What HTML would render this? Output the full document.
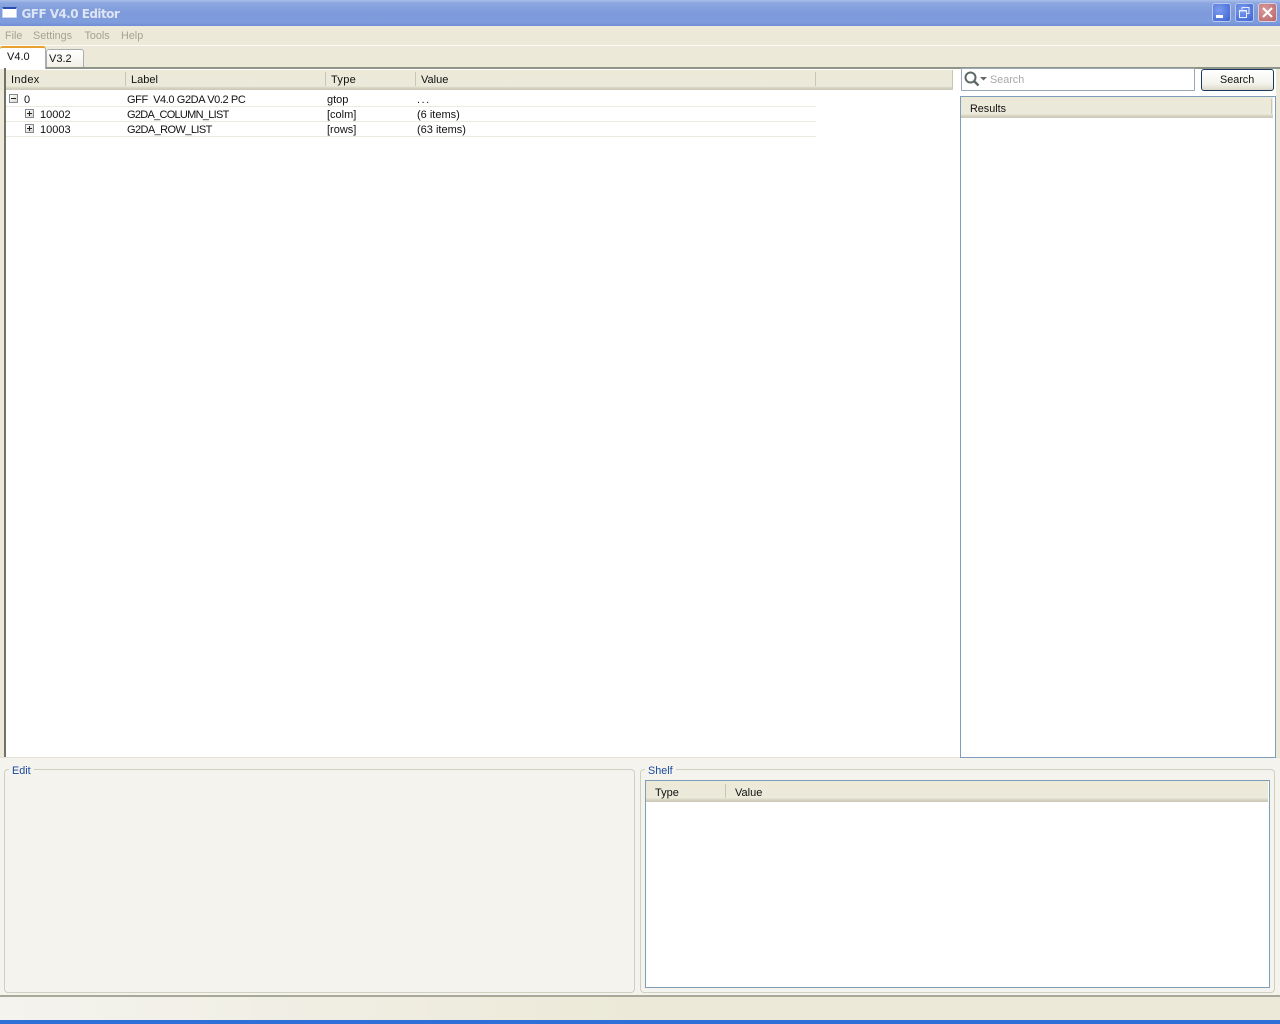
<!DOCTYPE html>
<html><head><meta charset="utf-8"><title>GFF V4.0 Editor</title>
<style>
html,body{margin:0;padding:0;width:1280px;height:1024px;overflow:hidden;background:#ece9d8}
body{position:relative;font-family:"Liberation Sans",sans-serif;font-size:11px;color:#111}
.a{position:absolute;box-sizing:border-box}
.t{position:absolute;white-space:nowrap;line-height:13px;font-size:11px;transform:translateY(2px)}
.hd{font-size:11px}
.m{font-size:10.8px;color:#a5a294}
.h{background:linear-gradient(#ece9d8 0,#ebeadb 80%,#d6d2c0 90%,#cbc7b8 100%)}
.s{position:absolute;width:1px;background:#c9c6b4}
.sq{position:absolute;width:9px;height:9px;box-sizing:border-box;border:1px solid #7f8a92;background:linear-gradient(135deg,#fff,#d8d5c8)}
.sq:before{content:"";position:absolute;left:1px;top:3px;width:5px;height:1px;background:#222}
.p:after{content:"";position:absolute;left:3px;top:1px;width:1px;height:5px;background:#222}
.l{position:absolute;left:6px;width:810px;height:1px;background:#ece9e0}
</style></head><body>
<!-- title bar -->
<div class="a" style="left:0;top:0;width:1280px;height:26px;background:linear-gradient(#a9bfe8 0,#8ba6e0 12%,#7e9ada 50%,#7f9cdd 85%,#6f8ed4 100%)"></div>
<div class="a" style="left:2px;top:7px;width:15px;height:11px;background:#fff;border:1px solid #c8d4f0;border-top:2px solid #2a4fb0;border-radius:1px"></div>
<div class="t" style="left:21.5px;top:4px;line-height:16px;font-weight:bold;color:#dde4f4;font-family:'DejaVu Sans',sans-serif;font-size:12px;letter-spacing:-.55px">GFF V4.0 Editor</div>
<div class="a" style="left:1212px;top:3px;width:19px;height:19px;border:1px solid #b8c8ee;border-radius:3px;background:radial-gradient(circle at 35% 35%,#7d9cf0,#3c62d0)"></div>
<div class="a" style="left:1216px;top:15px;width:7px;height:3px;background:#fff"></div>
<div class="a" style="left:1235px;top:3px;width:19px;height:19px;border:1px solid #b8c8ee;border-radius:3px;background:radial-gradient(circle at 35% 35%,#7d9cf0,#3c62d0)"></div>
<svg class="a" style="left:1235px;top:3px" width="19" height="19"><path d="M7 4.5h7v6h-2M7 4.5v2M4.5 7.5h7v7h-7zM4.5 8h7" fill="none" stroke="#e8eefc" stroke-width="1"/></svg>
<div class="a" style="left:1258px;top:3px;width:19px;height:19px;border:1px solid #d8d0dc;border-radius:3px;background:radial-gradient(circle at 35% 35%,#d89a9c,#b86468)"></div>
<svg class="a" style="left:1258px;top:3px" width="19" height="19"><path d="M5 5l9 9M14 5l-9 9" stroke="#fff" stroke-width="2" fill="none"/></svg>
<!-- menu -->
<div class="a" style="left:0;top:26px;width:1280px;height:19px;background:#ece9d8"></div>
<div class="a" style="left:0;top:45px;width:1280px;height:1px;background:#fbfaf4"></div>
<div class="t m" style="left:5px;top:28px">File</div>
<div class="t m" style="left:33px;top:28px">Settings</div>
<div class="t m" style="left:84.5px;top:28px">Tools</div>
<div class="t m" style="left:121px;top:28px">Help</div>
<!-- tabs -->
<div class="a" style="left:46px;top:49px;width:38px;height:18px;border:1px solid #a9aeb0;border-bottom:none;border-radius:3px 3px 0 0;background:linear-gradient(#fff,#f1efe6)"></div>
<div class="t hd" style="left:49px;top:51px">V3.2</div>
<div class="a" style="left:0;top:46px;width:46px;height:23px;background:#fff;border-radius:3px 3px 0 0;border-top:2px solid #e8a030;border-right:1px solid #a9aeb0"></div>
<div class="t hd" style="left:7px;top:49px">V4.0</div>
<!-- main tree -->
<div class="a" style="left:0;top:67px;width:1280px;height:2px;background:#8e9488;clip-path:inset(0 0 0 46px)"></div>
<div class="a" style="left:4px;top:68px;width:2px;height:689px;background:#6e7468"></div>
<div class="a" style="left:6px;top:69px;width:949px;height:688px;background:#fff"></div>
<div class="a h" style="left:6px;top:70px;width:947px;height:20px"></div>
<div class="s" style="left:125px;top:72px;height:14px"></div>
<div class="s" style="left:325px;top:72px;height:14px"></div>
<div class="s" style="left:415px;top:72px;height:14px"></div>
<div class="s" style="left:815px;top:72px;height:14px"></div>
<div class="s" style="left:952px;top:70px;height:18px"></div>
<div class="t hd" style="left:11px;top:72px;letter-spacing:.35px">Index</div>
<div class="t hd" style="left:131px;top:72px">Label</div>
<div class="t hd" style="left:331px;top:72px;letter-spacing:.3px">Type</div>
<div class="t hd" style="left:421px;top:72px">Value</div>
<div class="l" style="top:106px"></div><div class="l" style="top:121px"></div><div class="l" style="top:136px"></div>
<div class="sq" style="left:9px;top:94px"></div>
<div class="sq p" style="left:25px;top:109px"></div>
<div class="sq p" style="left:25px;top:124px"></div>
<div class="t" style="left:24px;top:92px">0</div>
<div class="t" style="left:40px;top:107px">10002</div>
<div class="t" style="left:40px;top:122px">10003</div>
<div class="t" style="left:127px;top:92px;letter-spacing:-.4px">GFF&nbsp; V4.0 G2DA V0.2 PC</div>
<div class="t" style="left:127px;top:107px;letter-spacing:-.72px">G2DA_COLUMN_LIST</div>
<div class="t" style="left:127px;top:122px;letter-spacing:-.58px">G2DA_ROW_LIST</div>
<div class="t" style="left:327px;top:92px">gtop</div>
<div class="t" style="left:327px;top:107px">[colm]</div>
<div class="t" style="left:327px;top:122px">[rows]</div>
<div class="t" style="left:417px;top:92px;letter-spacing:1.5px">...</div>
<div class="t" style="left:417px;top:107px">(6 items)</div>
<div class="t" style="left:417px;top:122px">(63 items)</div>
<!-- right panel -->
<div class="a" style="left:955px;top:69px;width:325px;height:688px;background:#fff"></div>
<div class="a" style="left:1276px;top:69px;width:4px;height:688px;background:#ece9d8"></div>
<div class="a" style="left:961px;top:68px;width:234px;height:23px;background:#fff;border:1px solid #9aa8b8"></div>
<svg class="a" style="left:963px;top:70px" width="26" height="18"><circle cx="7.5" cy="7.5" r="5" fill="none" stroke="#5e6a66" stroke-width="2"/><path d="M11 11l4.5 4.5" stroke="#5e6a66" stroke-width="2.4"/><path d="M17 7h7l-3.5 3.5z" fill="#666"/></svg>
<div class="t" style="left:990px;top:72px;color:#a8a8a8;font-size:10.8px">Search</div>
<div class="a" style="left:1201px;top:69px;width:73px;height:22px;border:1px solid #1c3a5c;border-radius:3px;background:linear-gradient(#fff,#f3f2ea 70%,#dcd8c8)"></div>
<div class="t" style="left:1220px;top:72px;font-size:10.8px">Search</div>
<!-- bottom area -->
<div class="a" style="left:0;top:757px;width:1280px;height:238px;background:#f4f3ee"></div>
<div class="a" style="left:0;top:757px;width:1280px;height:1px;background:#e4e2d6"></div>
<div class="a" style="left:960px;top:96px;width:316px;height:662px;border:1px solid #7f9db9;background:#fff"></div>
<div class="a h" style="left:961px;top:97px;width:312px;height:21px"></div>
<div class="s" style="left:1271px;top:99px;height:15px"></div>
<div class="t" style="left:970px;top:101px;font-size:10.8px">Results</div>
<div class="a" style="left:4px;top:769px;width:631px;height:224px;border:1px solid #d0d0bf;border-radius:4px"></div>
<div class="t" style="left:9px;top:763px;padding:0 3px;background:#f4f3ee;color:#1a4a9c;font-size:10.8px">Edit</div>
<div class="a" style="left:640px;top:769px;width:635px;height:224px;border:1px solid #d0d0bf;border-radius:4px"></div>
<div class="t" style="left:645px;top:763px;padding:0 3px;background:#f4f3ee;color:#1a4a9c;font-size:10.8px">Shelf</div>
<div class="a" style="left:645px;top:780px;width:625px;height:208px;border:1px solid #7f9db9;background:#fff"></div>
<div class="a h" style="left:646px;top:781px;width:622px;height:21px"></div>
<div class="s" style="left:725px;top:784px;height:14px"></div>
<div class="t" style="left:655px;top:785px">Type</div>
<div class="t" style="left:735px;top:785px">Value</div>
<!-- status -->
<div class="a" style="left:0;top:995px;width:1280px;height:2px;background:#a8a898"></div>
<div class="a" style="left:0;top:997px;width:1280px;height:23px;background:linear-gradient(90deg,#f4f3ee,#ece9d8 50%)"></div>
<div class="a" style="left:0;top:1020px;width:1280px;height:4px;background:#2f6fd8"></div>
</body></html>
